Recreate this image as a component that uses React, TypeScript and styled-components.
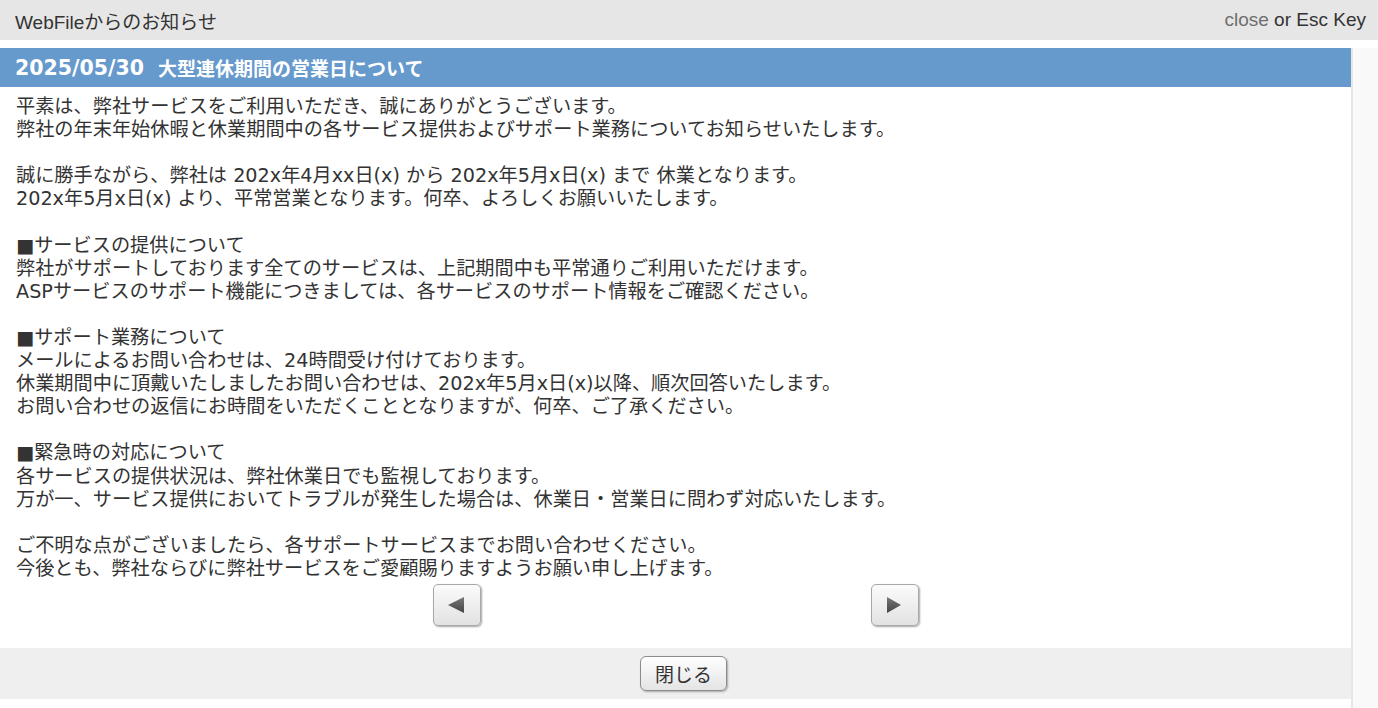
import React from "react";
import styled, { createGlobalStyle } from "styled-components";

const GlobalStyle = createGlobalStyle`
  html, body {
    margin: 0;
    padding: 0;
    background: #ffffff;
  }
  body {
    font-family: "Liberation Sans", "Noto Sans CJK JP", sans-serif;
    color: #333333;
  }
`;

const Page = styled.div`
  width: 1378px;
  height: 708px;
  display: flex;
  flex-direction: column;
  overflow: hidden;
`;

const TopBar = styled.header`
  height: 40px;
  flex: 0 0 40px;
  background: #e6e6e6;
  display: flex;
  align-items: center;
  justify-content: space-between;
  padding: 0 12px 0 15px;
  font-size: 19px;
  color: #333333;
`;

const CloseHint = styled.span`
  color: #333333;
`;

const CloseWord = styled.span`
  color: #6e6e6e;
`;

const Main = styled.div`
  flex: 1;
  display: flex;
  margin-top: 8px;
  min-height: 0;
`;

const Content = styled.div`
  flex: 1;
  display: flex;
  flex-direction: column;
`;

const ScrollTrack = styled.div`
  width: 25px;
  flex: 0 0 25px;
  background: #f9f9f9;
  border-left: 2px solid #e6e6e6;
`;

const TitleBar = styled.h1`
  margin: 0;
  height: 39px;
  display: flex;
  align-items: center;
  padding-left: 15px;
  background: #6699cc;
  color: #ffffff;
  font-family: "DejaVu Sans", "Noto Sans CJK JP", sans-serif;
  font-size: 19px;
  font-weight: bold;
  white-space: pre;
`;

const TitleDate = styled.span`
  font-size: 20.5px;
  margin-right: 14px;
`;

const Body = styled.div`
  padding: 8px 16px 0 16px;
  font-family: "DejaVu Sans", "Noto Sans CJK JP", sans-serif;
  font-size: 19.2px;
  line-height: 23.1px;
  color: #333333;
`;

const Para = styled.p`
  margin: 0 0 23.1px 0;
  white-space: pre-wrap;
  &:last-child {
    margin-bottom: 0;
  }
`;

const Pager = styled.div`
  display: flex;
  justify-content: space-between;
  width: 486px;
  margin: 4px auto 0 auto;
`;

const ArrowButton = styled.button`
  width: 48px;
  height: 42px;
  padding: 0;
  display: flex;
  align-items: center;
  justify-content: center;
  border: 1px solid #a8a8a8;
  border-radius: 5px;
  background: linear-gradient(#fbfbfb, #e2e2e2);
  box-shadow: 1px 1px 2px rgba(0, 0, 0, 0.35);
  cursor: pointer;
`;

const Footer = styled.div`
  margin-top: 22px;
  height: 51px;
  padding-left: 16px;
  background: #efefef;
  display: flex;
  align-items: center;
  justify-content: center;
`;

const CloseButton = styled.button`
  width: 87px;
  height: 35px;
  margin-top: 1px;
  border: 1px solid #8c8c8c;
  border-radius: 6px;
  background: linear-gradient(#ffffff, #e4e4e4);
  box-shadow: 1px 1px 2px rgba(0, 0, 0, 0.3);
  font-family: "Noto Sans CJK JP", sans-serif;
  font-size: 19px;
  color: #333333;
  cursor: pointer;
  padding: 0;
`;

const Arrow = ({ dir }: { dir: "left" | "right" }) => (
  <svg width="17" height="16" viewBox="0 0 17 16">
    <defs>
      <linearGradient id={`g-${dir}`} x1="0" y1="0" x2="0" y2="1">
        <stop offset="0" stopColor="#777" />
        <stop offset="1" stopColor="#444" />
      </linearGradient>
    </defs>
    {dir === "left" ? (
      <polygon points="16,0 16,16 0,8" fill={`url(#g-${dir})`} />
    ) : (
      <polygon points="1,0 1,16 15,8" fill={`url(#g-${dir})`} />
    )}
  </svg>
);

const paragraphs = [
  "平素は、弊社サービスをご利用いただき、誠にありがとうございます。\n弊社の年末年始休暇と休業期間中の各サービス提供およびサポート業務についてお知らせいたします。",
  "誠に勝手ながら、弊社は 202x年4月xx日(x) から 202x年5月x日(x) まで 休業となります。\n202x年5月x日(x) より、平常営業となります。何卒、よろしくお願いいたします。",
  "■サービスの提供について\n弊社がサポートしております全てのサービスは、上記期間中も平常通りご利用いただけます。\nASPサービスのサポート機能につきましては、各サービスのサポート情報をご確認ください。",
  "■サポート業務について\nメールによるお問い合わせは、24時間受け付けております。\n休業期間中に頂戴いたしましたお問い合わせは、202x年5月x日(x)以降、順次回答いたします。\nお問い合わせの返信にお時間をいただくこととなりますが、何卒、ご了承ください。",
  "■緊急時の対応について\n各サービスの提供状況は、弊社休業日でも監視しております。\n万が一、サービス提供においてトラブルが発生した場合は、休業日・営業日に問わず対応いたします。",
  "ご不明な点がございましたら、各サポートサービスまでお問い合わせください。\n今後とも、弊社ならびに弊社サービスをご愛顧賜りますようお願い申し上げます。",
];

export default function App() {
  return (
    <Page>
      <GlobalStyle />
      <TopBar>
        <span>WebFileからのお知らせ</span>
        <CloseHint>
          <CloseWord>close</CloseWord> or Esc Key
        </CloseHint>
      </TopBar>
      <Main>
        <Content>
          <TitleBar>
            <TitleDate>2025/05/30</TitleDate>
            大型連休期間の営業日について
          </TitleBar>
          <Body>
            {paragraphs.map((p, i) => (
              <Para key={i}>{p}</Para>
            ))}
          </Body>
          <Pager>
            <ArrowButton aria-label="前へ">
              <Arrow dir="left" />
            </ArrowButton>
            <ArrowButton aria-label="次へ">
              <Arrow dir="right" />
            </ArrowButton>
          </Pager>
          <Footer>
            <CloseButton>閉じる</CloseButton>
          </Footer>
        </Content>
        <ScrollTrack />
      </Main>
    </Page>
  );
}
